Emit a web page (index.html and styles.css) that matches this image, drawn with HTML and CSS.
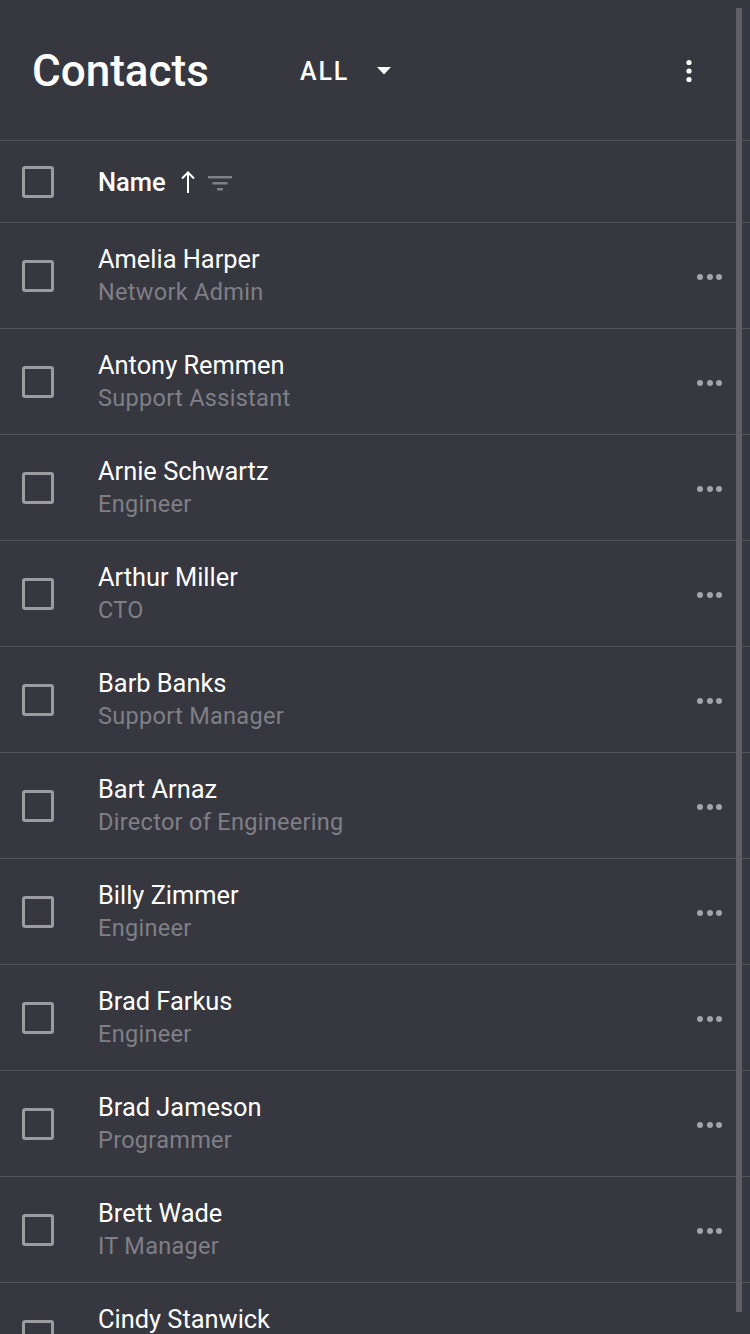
FILE: index.html
```html
<!DOCTYPE html>
<html>
<head>
<meta charset="utf-8">
<link rel="stylesheet" href="styles.css">
</head>
<body>
<div class="app">
  <header class="topbar">
    <h1 class="title">Contacts</h1>
    <div class="filter">
      <span class="filter-label">ALL</span>
      <svg class="caret" width="14" height="8" viewBox="0 0 14 8"><path d="M0 0h14L7 7.5z" fill="#fff"/></svg>
    </div>
    <svg class="kebab" width="8" height="24" viewBox="0 0 8 24"><circle cx="4" cy="3.5" r="2.6" fill="#fff"/><circle cx="4" cy="12" r="2.6" fill="#fff"/><circle cx="4" cy="20.5" r="2.6" fill="#fff"/></svg>
  </header>
  <div class="colhead">
    <span class="check"></span>
    <span class="colname">Name</span>
    <svg class="arrow" width="14" height="22" viewBox="0 0 14 22"><path d="M7 1.5V22M1 7.5L7 1.5L13 7.5" fill="none" stroke="#fff" stroke-width="2"/></svg>
    <svg class="filt" width="24" height="18" viewBox="0 0 24 18"><rect x="0" y="2" width="24" height="2.5" fill="#808087"/><rect x="4.5" y="8" width="15" height="2.5" fill="#808087"/><rect x="9" y="14" width="6" height="2.5" fill="#808087"/></svg>
  </div>
  <ul class="list">
    <li class="row"><span class="check"></span><div class="text"><div class="name">Amelia Harper</div><div class="role">Network Admin</div></div><span class="dots"><i></i><i></i><i></i></span></li>
    <li class="row"><span class="check"></span><div class="text"><div class="name">Antony Remmen</div><div class="role">Support Assistant</div></div><span class="dots"><i></i><i></i><i></i></span></li>
    <li class="row"><span class="check"></span><div class="text"><div class="name">Arnie Schwartz</div><div class="role">Engineer</div></div><span class="dots"><i></i><i></i><i></i></span></li>
    <li class="row"><span class="check"></span><div class="text"><div class="name">Arthur Miller</div><div class="role">CTO</div></div><span class="dots"><i></i><i></i><i></i></span></li>
    <li class="row"><span class="check"></span><div class="text"><div class="name">Barb Banks</div><div class="role">Support Manager</div></div><span class="dots"><i></i><i></i><i></i></span></li>
    <li class="row"><span class="check"></span><div class="text"><div class="name">Bart Arnaz</div><div class="role">Director of Engineering</div></div><span class="dots"><i></i><i></i><i></i></span></li>
    <li class="row"><span class="check"></span><div class="text"><div class="name">Billy Zimmer</div><div class="role">Engineer</div></div><span class="dots"><i></i><i></i><i></i></span></li>
    <li class="row"><span class="check"></span><div class="text"><div class="name">Brad Farkus</div><div class="role">Engineer</div></div><span class="dots"><i></i><i></i><i></i></span></li>
    <li class="row"><span class="check"></span><div class="text"><div class="name">Brad Jameson</div><div class="role">Programmer</div></div><span class="dots"><i></i><i></i><i></i></span></li>
    <li class="row"><span class="check"></span><div class="text"><div class="name">Brett Wade</div><div class="role">IT Manager</div></div><span class="dots"><i></i><i></i><i></i></span></li>
    <li class="row"><span class="check"></span><div class="text"><div class="name">Cindy Stanwick</div><div class="role">HR Manager</div></div><span class="dots"><i></i><i></i><i></i></span></li>
  </ul>
  <div class="scrollbar"></div>
</div>
</body>
</html>
```
FILE: styles.css
```css
* { box-sizing: border-box; }
html, body { margin: 0; padding: 0; }
body {
  width: 750px;
  height: 1334px;
  overflow: hidden;
  background: #373740;
  font-family: Roboto, "Liberation Sans", sans-serif;
  color: #fff;
}
.app { position: relative; height: 1334px; overflow: hidden; }
.topbar {
  height: 141px;
  display: flex;
  align-items: center;
  padding: 2px 0 0 32px;
  border-bottom: 1px solid #53535a;
}
.title {
  margin: 0;
  font-size: 44px;
  font-weight: 500;
  line-height: 1;
  width: 268px;
}
.filter { display: flex; align-items: center; }
.filter-label {
  font-size: 25px;
  font-weight: 500;
  letter-spacing: 1.8px;
}
.caret { margin-left: 28px; }
.kebab { margin-left: auto; margin-right: 57px; }
.colhead {
  height: 82px;
  display: flex;
  align-items: center;
  padding-left: 22px;
  border-bottom: 1px solid #53535a;
}
.check {
  width: 32px;
  height: 32px;
  border: 3px solid #9b9ba0;
  border-radius: 3px;
  flex: none;
}
.colname {
  margin-left: 44px;
  font-size: 25.5px;
  font-weight: 500;
}
.arrow { margin-left: 15px; }
.filt { margin-left: 13px; margin-top: 2px; }
.list { list-style: none; margin: 0; padding: 0; }
.row {
  height: 106px;
  display: flex;
  align-items: center;
  padding-left: 22px;
  border-bottom: 1px solid #53535a;
}
.text { margin-left: 44px; flex: 1; padding-top: 1px; }
.name { font-size: 25.4px; line-height: 33px; }
.role { font-size: 23.5px; line-height: 33px; color: #7f7f86; letter-spacing: 0.3px; }
.dots { display: flex; gap: 3.5px; margin-right: 28px; margin-top: 3px; }
.dots i { width: 6px; height: 6px; border-radius: 50%; background: #a3a3a9; display: block; }
.scrollbar {
  position: absolute;
  top: 8px;
  left: 736px;
  width: 6px;
  height: 1304px;
  background: #5e5e64;
}
```
